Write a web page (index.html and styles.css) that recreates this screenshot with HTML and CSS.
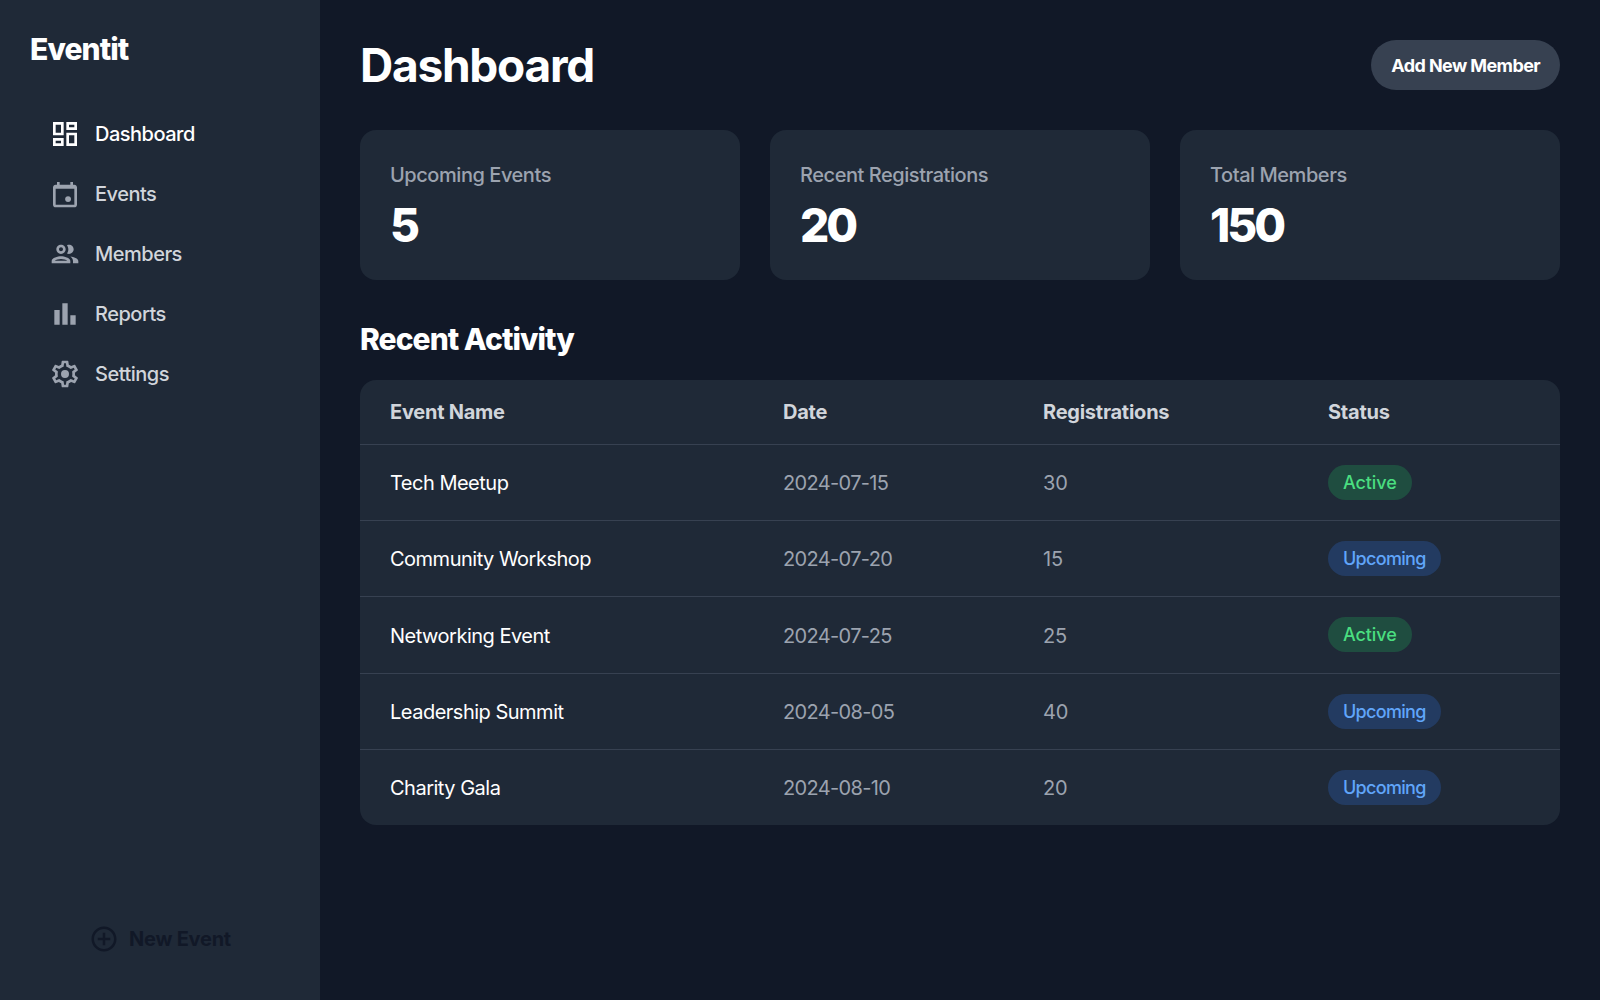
FILE: index.html
```html
<!DOCTYPE html>
<html lang="en">
<head>
<meta charset="UTF-8" />
<title>Eventit</title>
<link rel="stylesheet" href="styles.css">
</head>
<body>

<div class="app">
  <aside class="sidebar">
    <div class="logo">Eventit</div>
    <nav class="nav">
      <a class="navItem active">
        <svg class="icon" viewBox="0 0 24 24"><path d="M19 5v2h-4V5h4M9 5v6H5V5h4m10 8v6h-4v-6h4M9 17v2H5v-2h4M21 3h-8v6h8V3zM11 3H3v10h8V3zm10 8h-8v10h8V11zm-10 4H3v6h8v-6z"/></svg>
        Dashboard
      </a>
      <a class="navItem">
        <svg class="icon" viewBox="0 0 24 24"><path fill-rule="evenodd" d="M6 3h2v2h8V3h2v2h1c1.100 0 2 .9 2 2v13c0 1.100-.9 2-2 2H5c-1.100 0-2-.9-2-2V7c0-1.100.9-2 2-2h1V3zM5 8v12h14V8H5z"/><circle cx="14.300" cy="15.800" r="2.200"/></svg>
        Events
      </a>
      <a class="navItem">
        <svg class="icon" viewBox="0 0 24 24"><path d="M9 13.750c-2.340 0-7 1.170-7 3.500V19h14v-1.750c0-2.330-4.660-3.500-7-3.500zM4.340 17c.84-.58 2.870-1.250 4.660-1.250s3.820.67 4.660 1.250H4.340zM9 12c1.930 0 3.500-1.570 3.500-3.500S10.930 5 9 5 5.500 6.570 5.500 8.500 7.070 12 9 12zm0-5c.83 0 1.500.67 1.500 1.500S9.830 10 9 10s-1.500-.67-1.500-1.500S8.170 7 9 7zm7.040 6.810c1.160.84 1.960 1.960 1.960 3.440V19h4v-1.750c0-2.020-3.500-3.170-5.960-3.440zM15 12c1.930 0 3.500-1.570 3.500-3.500S16.930 5 15 5c-.54 0-1.040.13-1.500.35.63.89 1 1.980 1 3.150s-.37 2.260-1 3.150c.46.22.96.35 1.500.35z"/></svg>
        Members
      </a>
      <a class="navItem">
        <svg class="icon" viewBox="0 0 24 24"><path d="M4 9h4v11H4zM16 13h4v7h-4zM10 4h4v16h-4z"/></svg>
        Reports
      </a>
      <a class="navItem">
        <svg class="icon" viewBox="0 0 24 24"><path d="M19.430 12.980c.04-.32.07-.64.07-.98s-.03-.66-.07-.98l2.110-1.650c.19-.15.24-.42.12-.64l-2-3.460c-.12-.22-.39-.3-.61-.22l-2.490 1c-.52-.4-1.080-.73-1.690-.98l-.38-2.650A.488.488 0 0 0 14 2h-4c-.25 0-.46.18-.49.42l-.38 2.650c-.61.25-1.170.59-1.690.98l-2.490-1c-.23-.09-.49 0-.61.22l-2 3.460c-.13.22-.07.49.12.64l2.110 1.650c-.04.32-.07.65-.07.98s.03.66.07.98l-2.110 1.650c-.19.15-.24.42-.12.64l2 3.460c.12.22.39.3.61.22l2.490-1c.52.4 1.080.73 1.690.98l.38 2.650c.03.24.24.42.49.42h4c.25 0 .46-.18.49-.42l.38-2.650c.61-.25 1.170-.59 1.690-.98l2.490 1c.23.09.49 0 .61-.22l2-3.460c.12-.22.07-.49-.12-.64l-2.110-1.650zm-1.980-1.710c.04.31.05.52.05.73s-.02.43-.05.73l-.14 1.130.89.7 1.080.84-.7 1.210-1.270-.51-1.040-.42-.9.68c-.43.32-.84.56-1.250.73l-1.060.43-.16 1.130-.2 1.350h-1.400l-.19-1.350-.16-1.130-1.060-.43c-.43-.18-.83-.41-1.230-.71l-.91-.7-1.060.43-1.270.51-.7-1.210 1.080-.84.89-.7-.14-1.130c-.03-.31-.05-.54-.05-.74s.02-.43.05-.73l.14-1.130-.89-.7-1.080-.84.7-1.210 1.270.51 1.040.42.9-.68c.43-.32.84-.56 1.250-.73l1.060-.43.16-1.130.2-1.350h1.390l.19 1.350.16 1.130 1.060.43c.43.18.83.41 1.230.71l.91.7 1.060-.43 1.270-.51.7 1.210-1.070.85-.89.7.14 1.130zM12 9a3 3 0 1 0 0 6 3 3 0 0 0 0-6z"/></svg>
        Settings
      </a>
    </nav>
    <button class="newEvent">
      <svg class="icon" viewBox="0 0 24 24"><path d="M13 7h-2v4H7v2h4v4h2v-4h4v-2h-4V7zm-1-5C6.480 2 2 6.480 2 12s4.480 10 10 10 10-4.480 10-10S17.520 2 12 2zm0 18c-4.410 0-8-3.590-8-8s3.590-8 8-8 8 3.590 8 8-3.590 8-8 8z"/></svg>
      New Event
    </button>
  </aside>

  <main class="main">
    <header class="header">
      <h1 class="title">Dashboard</h1>
      <button class="addBtn">Add New Member</button>
    </header>

    <section class="stats">
      <div class="card">
        <div class="cardLabel">Upcoming Events</div>
        <div class="cardValue">5</div>
      </div>
      <div class="card">
        <div class="cardLabel">Recent Registrations</div>
        <div class="cardValue">20</div>
      </div>
      <div class="card">
        <div class="cardLabel">Total Members</div>
        <div class="cardValue">150</div>
      </div>
    </section>

    <h2 class="sectionTitle">Recent Activity</h2>

    <div class="tableWrap">
      <table class="table">
        <thead>
          <tr>
            <th class="colName">Event Name</th>
            <th class="colDate">Date</th>
            <th class="colReg">Registrations</th>
            <th>Status</th>
          </tr>
        </thead>
        <tbody>
          <tr>
            <td class="eventName">Tech Meetup</td>
            <td class="date">2024-07-15</td>
            <td>30</td>
            <td class="status"><span class="badge green">Active</span></td>
          </tr>
          <tr>
            <td class="eventName">Community Workshop</td>
            <td class="date">2024-07-20</td>
            <td>15</td>
            <td class="status"><span class="badge blue">Upcoming</span></td>
          </tr>
          <tr>
            <td class="eventName">Networking Event</td>
            <td class="date">2024-07-25</td>
            <td>25</td>
            <td class="status"><span class="badge green">Active</span></td>
          </tr>
          <tr>
            <td class="eventName">Leadership Summit</td>
            <td class="date">2024-08-05</td>
            <td>40</td>
            <td class="status"><span class="badge blue">Upcoming</span></td>
          </tr>
          <tr>
            <td class="eventName">Charity Gala</td>
            <td class="date">2024-08-10</td>
            <td>20</td>
            <td class="status"><span class="badge blue">Upcoming</span></td>
          </tr>
        </tbody>
      </table>
    </div>
  </main>
</div>

</body>
</html>
```

FILE: styles.css
```css
* {
  box-sizing: border-box;
}
body {
  margin: 0;
  background: #111827;
  color: #fff;
  font-family: Inter, "Liberation Sans", sans-serif;
}
.app {
  display: flex;
  height: 1000px;
}

/* sidebar */
.sidebar {
  width: 320px;
  flex-shrink: 0;
  background: #1f2937;
  padding: 30px;
  display: flex;
  flex-direction: column;
}
.logo {
  font-size: 30px;
  line-height: 38px;
  font-weight: 800;
  letter-spacing: -0.9px;
}
.nav {
  margin-top: 42px;
  padding-left: 19px;
  display: flex;
  flex-direction: column;
  gap: 12px;
  flex: 1;
}
.navItem {
  display: flex;
  align-items: center;
  gap: 14px;
  height: 48px;
  font-size: 20px;
  font-weight: 500;
  letter-spacing: -0.5px;
  color: #d1d5db;
}
.navItem .icon {
  fill: #9ca3af;
}
.navItem.active {
  color: #fff;
}
.navItem.active .icon {
  fill: #fff;
}
.icon {
  width: 32px;
  height: 32px;
  flex-shrink: 0;
}
.newEvent {
  display: flex;
  align-items: center;
  justify-content: center;
  gap: 10px;
  height: 48px;
  margin-bottom: 7px;
  background: none;
  border: none;
  font: inherit;
  font-size: 20px;
  font-weight: 700;
  letter-spacing: -0.25px;
  color: #111827;
}
.newEvent .icon {
  width: 30px;
  height: 30px;
  fill: #111827;
}

/* main */
.main {
  flex: 1;
  padding: 40px;
}
.header {
  display: flex;
  justify-content: space-between;
  align-items: center;
  height: 50px;
}
.title {
  margin: 0;
  font-size: 46px;
  font-weight: 700;
  letter-spacing: -1.25px;
}
.addBtn {
  height: 50px;
  padding: 0 20px;
  border: none;
  border-radius: 25px;
  background: #374151;
  color: #fff;
  font: inherit;
  font-size: 18px;
  font-weight: 700;
  letter-spacing: -0.6px;
}
.stats {
  display: grid;
  grid-template-columns: repeat(3, 1fr);
  gap: 30px;
  margin-top: 40px;
}
.card {
  height: 150px;
  padding: 30px;
  background: #1f2937;
  border-radius: 16px;
}
.cardLabel {
  font-size: 20px;
  line-height: 30px;
  font-weight: 500;
  letter-spacing: -0.45px;
  color: #9ca3af;
}
.cardValue {
  margin-top: 7px;
  font-size: 46px;
  line-height: 56px;
  font-weight: 800;
  letter-spacing: -3px;
}
.sectionTitle {
  margin: 40px 0 0;
  font-size: 30px;
  line-height: 38px;
  font-weight: 800;
  letter-spacing: -0.95px;
}
.tableWrap {
  margin-top: 22px;
  background: #1f2937;
  border-radius: 16px;
  overflow: hidden;
}
.table {
  width: 100%;
  border-collapse: collapse;
  table-layout: fixed;
}
.table th {
  height: 64px;
  padding: 0 30px;
  text-align: left;
  font-size: 20px;
  font-weight: 700;
  letter-spacing: -0.25px;
  color: #d1d5db;
}
.colName {
  width: 393px;
}
.colDate {
  width: 260px;
}
.colReg {
  width: 285px;
}
.table td {
  height: 76px;
  padding: 2px 30px 0;
  border-top: 1px solid #374151;
  font-size: 20px;
  letter-spacing: -0.1px;
  color: #9ca3af;
}
.table tbody tr:nth-child(3) td {
  height: 77px;
}
.table td.eventName {
  color: #fff;
  font-weight: 400;
  letter-spacing: -0.5px;
}
.table td.date {
  letter-spacing: -0.65px;
}
.table td.status {
  padding: 0 30px;
}
.badge {
  display: inline-block;
  padding: 0 15px;
  height: 35px;
  line-height: 35px;
  border-radius: 18px;
  font-size: 18px;
  font-weight: 500;
}
.badge.green {
  background: #1f4d40;
  color: #4ade80;
}
.badge.blue {
  background: #233b61;
  color: #60a5fa;
  letter-spacing: -0.7px;
}
```
